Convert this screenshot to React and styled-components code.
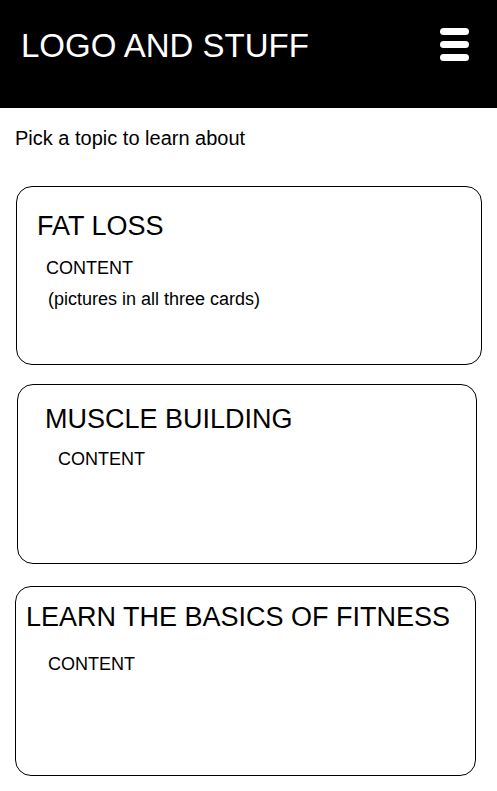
import React from 'react';
import styled, { createGlobalStyle } from 'styled-components';

const GlobalStyle = createGlobalStyle`
  body {
    margin: 0;
    background: #fff;
    font-family: "Liberation Sans", Arial, sans-serif;
    color: #000;
  }
  * { box-sizing: border-box; }
`;

const Header = styled.header`
  height: 108px;
  background: #000;
  display: flex;
  justify-content: space-between;
  align-items: flex-start;
  padding: 27px 28px 0 21px;
`;

const Logo = styled.h1`
  margin: 0;
  font-size: 33px;
  font-weight: normal;
  color: #fff;
`;

const Menu = styled.div`
  display: flex;
  flex-direction: column;
  gap: 6px;
  padding-top: 1px;
  span {
    display: block;
    width: 29px;
    height: 7px;
    border-radius: 4px;
    background: #fff;
  }
`;

const Intro = styled.p`
  margin: 19px 0 0 15px;
  font-size: 20px;
`;

const Cards = styled.main`
  display: flex;
  flex-direction: column;
  padding-top: 36px;
`;

const Card = styled.section`
  border: 1px solid #000;
  border-radius: 16px;
  margin: ${({ $top }) => $top}px 0 0 ${({ $left }) => $left}px;
  width: ${({ $width }) => $width}px;
  height: ${({ $height }) => $height}px;
  padding: ${({ $pad }) => $pad};
`;

const Title = styled.h2`
  margin: 0;
  font-size: 27px;
  font-weight: normal;
`;

const Body = styled.div`
  margin: ${({ $gap }) => $gap}px 0 0 ${({ $indent }) => $indent}px;
  font-size: 18px;

  p {
    margin: 0;
  }
  p + p {
    margin: 10px 0 0 2px;
  }
`;

const topics = [
  { title: 'FAT LOSS', top: 0, left: 16, width: 466, height: 179, pad: '24px 0 0 20px', gap: 16, indent: 9, lines: ['CONTENT', '(pictures in all three cards)'] },
  { title: 'MUSCLE BUILDING', top: 19, left: 17, width: 460, height: 180, pad: '19px 0 0 27px', gap: 14, indent: 13, lines: ['CONTENT'] },
  { title: 'LEARN THE BASICS OF FITNESS', top: 22, left: 15, width: 461, height: 190, pad: '15px 0 0 10px', gap: 21, indent: 22, lines: ['CONTENT'] },
];

const App = () => {
  return (
    <>
      <GlobalStyle />
      <Header>
        <Logo>LOGO AND STUFF</Logo>
        <Menu>
          <span />
          <span />
          <span />
        </Menu>
      </Header>
      <Intro>Pick a topic to learn about</Intro>
      <Cards>
        {topics.map((t) => (
          <Card key={t.title} $top={t.top} $left={t.left} $width={t.width} $height={t.height} $pad={t.pad}>
            <Title>{t.title}</Title>
            <Body $gap={t.gap} $indent={t.indent}>
              {t.lines.map((l) => <p key={l}>{l}</p>)}
            </Body>
          </Card>
        ))}
      </Cards>
    </>
  );
};

export default App;
